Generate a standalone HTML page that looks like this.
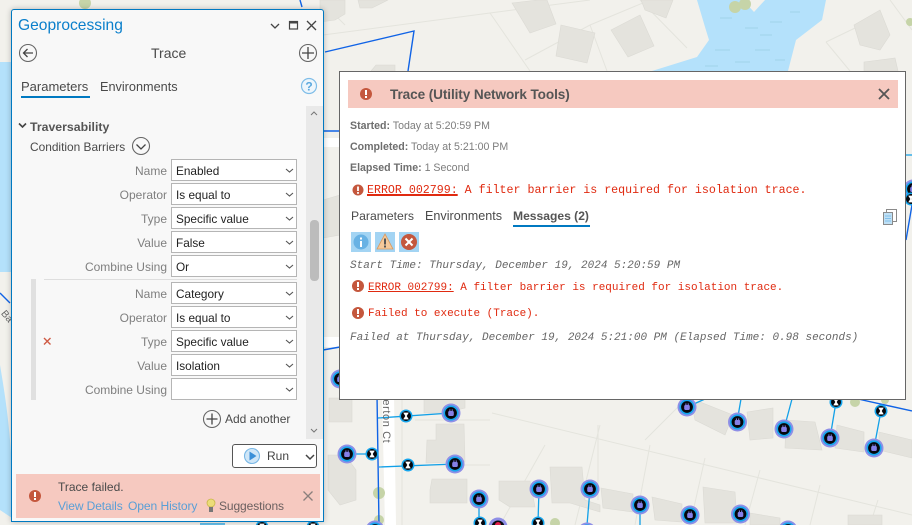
<!DOCTYPE html>
<html><head><meta charset="utf-8"><style>
html,body{margin:0;padding:0}
body{width:912px;height:525px;overflow:hidden;position:relative;background:#f2f1ec;font-family:"Liberation Sans",sans-serif}
svg{position:absolute;left:0;top:0}
.t{position:absolute;white-space:nowrap;line-height:16px;height:16px}
.l{position:absolute;white-space:nowrap;line-height:16px;right:745px;color:#7f7f7f;font-size:12px}
.s{position:absolute;left:171px;width:124px;height:20px;background:#fff;border:1px solid #b5b5b5;font-size:11.8px;line-height:22px;color:#222;text-indent:4px}
.m{position:absolute;white-space:pre;line-height:16px;font-family:"Liberation Mono",monospace;font-size:11px}
.r{color:#e02a10}
.i{font-style:italic;color:#666}
.d{font-size:10.6px;color:#7d7d7d}
.d b{color:#6e6e6e}
</style></head><body>
<svg width="912" height="525" viewBox="0 0 912 525">
<defs>
<g id="mt"><circle r="9.5" fill="#8f8fe6"/><circle r="7.6" fill="#16a6ee"/><circle r="5.9" fill="#05070d"/><rect x="-2.8" y="-2" width="5.6" height="5" rx="1.2" fill="#8580e8"/><rect x="-1.6" y="-3.6" width="1" height="2" fill="#8580e8"/><rect x=".7" y="-3.6" width="1" height="2" fill="#8580e8"/></g>
<g id="jn"><circle r="6.5" fill="#16a6ee"/><circle r="5" fill="#05070d"/><path d="M-2.8-3.4H2.8L.7 0 2.8 3.4H-2.8L-.7 0Z" fill="#fff"/></g>
</defs>
<!-- water -->
<path d="M697 0L705 27L709 40L697 57L652 71H788L796 40L822 20L826 0H765L754 12L743 0Z" fill="#b4e1fb"/>
<path d="M0 62V272H12V62Z" fill="#b4e1fb"/>
<path d="M0 365C6 400 10 430 12 470V518L0 510Z" fill="#b4e1fb"/>
<g stroke="#9fd2ea" stroke-width="1" fill="none">
<path d="M720 18H732M745 28H758M770 22H782M790 12H800M715 50H730M755 50H770M735 62H750M775 60H785M705 66H718M760 35H772"/>
</g>
<!-- parcel lines -->
<g stroke="#e4e4dd" stroke-width="1" fill="none">
<path d="M323 35L490 13M490 13L590 0M490 13L530 71M320 0L345 25M590 25L525 60M590 25L607 71M590 25L650 0M640 0L687 48M826 42L880 16M826 42L850 71M890 0L912 30"/>
<path d="M492 413L912 515M545 445L500 525M600 425L575 525M650 445L635 525M705 458L690 525M760 470L745 525M820 485L810 525M878 500L870 525M645 440L680 405M598 425V500M415 420H490M415 465H490M402 400V525"/>
</g>
<!-- houses -->
<g fill="#e4e3dd" stroke="#dbdad4" stroke-width=".6">
<path d="M512 3L538 0H547L556 24L530 33Z"/>
<path d="M561 25L595 33L587 63L556 56Z"/>
<path d="M611 30L640 15L654 46L628 57Z"/>
<path d="M641 0H673L666 18L645 10Z"/>
<path d="M320 0H345V14L335 20L320 22Z"/><path d="M358 0H388L372 8H360Z"/>
<path d="M854 25L880 10L890 35L880 50L860 45Z"/><path d="M864 62L895 58L898 71H864Z"/>
<path d="M371 71L376 65H395V71Z"/>
<path d="M329 398H352V422H329Z"/><path d="M424 398H465V408L445 413H424Z"/>
<path d="M436 424H464L465 462L426 463L427 440H436Z"/><path d="M432 479H467V503H430V490Z"/>
<path d="M328 455H345L356 470V500L340 505L328 490Z"/>
<path d="M499 481H530L535 507H510L499 500Z"/><path d="M550 467H582L585 500L600 505V512L570 503H552Z"/>
<path d="M601 488L633 494V512L603 508Z"/><path d="M652 497L682 504V522L655 520Z"/><path d="M703 487L735 492L737 523H705Z"/>
<path d="M750 513L780 518V525H750Z"/><path d="M848 515H882V525H848Z"/>
<path d="M692 405L700 402L733 415L725 435L695 420Z"/><path d="M747 412L773 408V438L750 440Z"/>
<path d="M786 420L815 422L822 450L785 448Z"/><path d="M837 425L864 432V452L835 448Z"/><path d="M879 432L912 440V458L879 450Z"/>
<path d="M323 200L340 195V235L323 238Z"/>
</g>
<!-- road -->
<path d="M382 395H394L396 525H385Z" fill="#fff"/>
<rect x="323" y="138" width="17" height="9" fill="#fff"/><rect x="323" y="337" width="17" height="10" fill="#fff"/>
<g fill="#c6d4a8"><circle cx="735" cy="7" r="6"/><circle cx="745" cy="4" r="6"/><circle cx="379" cy="493" r="6"/><circle cx="379" cy="520" r="5"/><circle cx="555" cy="523" r="5"/><circle cx="855" cy="402" r="5"/><circle cx="885" cy="400" r="4"/><circle cx="85" cy="3" r="6"/><circle cx="910" cy="22" r="4"/></g>
<!-- blue lines -->
<g fill="none" stroke="#1063e6" stroke-width="1.4">
<path d="M325 52L414 31L408 71M300 0L302 7M377 395L379 525M323 131H340M323 350L340 347M0 293L10 303M858 399L912 411M912 205L906 240"/>
</g>
<g fill="none" stroke="#11a0e8" stroke-width="1.3">
<path d="M378 418L451 413M347 454H372M379 467L455 464M479 499V523M539 489L538 523M590 489L587 525M640 505V525M687 407L705 399M737 422L741 399M784 429L792 399M830 438L836 402M874 448L881 411M906 155H912M200 524H225"/>
</g>
<!-- nodes -->
<use href="#mt" x="451" y="413"/><use href="#mt" x="687" y="407"/><use href="#mt" x="737.5" y="422"/><use href="#mt" x="784" y="429"/><use href="#mt" x="830" y="438"/><use href="#mt" x="874" y="448"/><use href="#mt" x="347" y="454"/><use href="#mt" x="455" y="464"/><use href="#mt" x="479" y="499"/><use href="#mt" x="539" y="489"/><use href="#mt" x="590" y="489"/><use href="#mt" x="640" y="505"/><use href="#mt" x="690" y="515"/><use href="#mt" x="740.5" y="514"/><use href="#mt" x="375" y="530"/><use href="#mt" x="587" y="532"/><use href="#mt" x="788" y="530"/><use href="#mt" x="913" y="189"/>
<use href="#mt" x="340" y="379"/>
<circle cx="498" cy="527" r="9.5" fill="#8f8fe6"/><circle cx="498" cy="527" r="6.5" fill="#0a0a10"/><circle cx="498" cy="525" r="3" fill="#e2204a"/>
<use href="#jn" x="406" y="416"/><use href="#jn" x="372" y="454"/><use href="#jn" x="408" y="465"/><use href="#jn" x="480" y="523"/><use href="#jn" x="538" y="523"/><use href="#jn" x="836" y="402"/><use href="#jn" x="881" y="411"/><use href="#jn" x="911" y="199"/><use href="#jn" x="262" y="527"/><use href="#jn" x="313" y="527"/>
</svg>
<div style="position:absolute;left:380px;top:418px;font:11px/12px 'Liberation Sans',sans-serif;color:#666;transform:translate(-50%,-50%) rotate(90deg);white-space:nowrap;margin-left:6px;letter-spacing:.6px">nerton Ct</div>
<div style="position:absolute;left:0;top:311px;font:10px/12px 'Liberation Sans',sans-serif;color:#666;transform:rotate(50deg)">Ba</div>

<!-- Panel -->
<div style="position:absolute;left:11px;top:9px;width:311px;height:511px;background:#f8f8f8;border:1px solid #0079c1;border-radius:3px 3px 0 0;box-shadow:0 0 6px rgba(0,0,0,.25)"></div>
<div class="t" style="left:18px;top:18px;font-size:15.6px;color:#0a7fcb">Geoprocessing</div>
<div class="t" style="left:151px;top:45px;font-size:14px;color:#4a4a4a">Trace</div>
<div class="t" style="left:21px;top:79px;font-size:13px;color:#4a4a4a">Parameters</div>
<div style="position:absolute;left:21px;top:95.5px;width:69px;height:2px;background:#0079c1"></div>
<div class="t" style="left:100px;top:79px;font-size:12.7px;color:#4a4a4a">Environments</div>
<div class="t" style="left:30px;top:119px;font-size:12.3px;font-weight:bold;color:#555">Traversability</div>
<div class="t" style="left:30px;top:139px;font-size:11.9px;color:#4a4a4a">Condition Barriers</div>
<div style="position:absolute;left:306px;top:106px;width:17px;height:333px;background:#e9e9e9"></div>
<div style="position:absolute;left:310px;top:220px;width:9px;height:61px;background:#bcbcbc;border-radius:4px"></div>
<div style="position:absolute;left:31px;top:279px;width:5px;height:121px;background:#e0e0e0"></div>
<div style="position:absolute;left:44px;top:279px;width:253px;height:1px;background:#dedede"></div>

<div class="l" style="top:163px">Name</div><div class="s" style="top:159px">Enabled</div>
<div class="l" style="top:187px">Operator</div><div class="s" style="top:183px">Is equal to</div>
<div class="l" style="top:211px">Type</div><div class="s" style="top:207px">Specific value</div>
<div class="l" style="top:235px">Value</div><div class="s" style="top:231px">False</div>
<div class="l" style="top:259px">Combine Using</div><div class="s" style="top:255px">Or</div>
<div class="l" style="top:286px">Name</div><div class="s" style="top:282px">Category</div>
<div class="l" style="top:310px">Operator</div><div class="s" style="top:306px">Is equal to</div>
<div class="l" style="top:334px">Type</div><div class="s" style="top:330px">Specific value</div>
<div class="l" style="top:358px">Value</div><div class="s" style="top:354px">Isolation</div>
<div class="l" style="top:382px">Combine Using</div><div class="s" style="top:378px"></div>
<div class="t" style="left:225px;top:411px;font-size:12px;color:#4a4a4a">Add another</div>
<div style="position:absolute;left:232px;top:444px;width:83px;height:22px;background:#fff;border:1px solid #555;border-radius:3px"></div>
<div class="t" style="left:267px;top:448px;font-size:12px;color:#444">Run</div>

<div style="position:absolute;left:16px;top:474px;width:304px;height:44px;background:#f6c9c0"></div>
<div class="t" style="left:58px;top:479px;font-size:12px;color:#4a4a4a">Trace failed.</div>
<div class="t" style="left:58px;top:498px;font-size:12px;color:#5a9fd6;letter-spacing:-.1px">View Details</div>
<div class="t" style="left:128px;top:498px;font-size:12.1px;color:#5a9fd6;letter-spacing:-.1px">Open History</div>
<div class="t" style="left:219px;top:498px;font-size:12px;color:#6b6060;letter-spacing:-.1px">Suggestions</div>

<!-- Dialog -->
<div style="position:absolute;left:339px;top:71px;width:565px;height:327px;background:#fff;border:1px solid #666"></div>
<div style="position:absolute;left:348px;top:80px;width:550px;height:28px;background:#f6c9c0"></div>
<div class="t" style="left:390px;top:87px;font-size:13.6px;font-weight:bold;color:#555;letter-spacing:-.1px">Trace (Utility Network Tools)</div>
<div class="t d" style="left:350px;top:118px"><b>Started:</b> Today at 5:20:59 PM</div>
<div class="t d" style="left:350px;top:139px"><b>Completed:</b> Today at 5:21:00 PM</div>
<div class="t d" style="left:350px;top:160px"><b>Elapsed Time:</b> 1 Second</div>
<div class="m" style="left:367px;top:183px;font-size:11.63px;color:#e02a10"><span style="text-decoration:underline;text-decoration-thickness:1.5px">ERROR 002799:</span> A filter barrier is required for isolation trace.</div>
<div class="t" style="left:351px;top:208px;font-size:12.2px;color:#4a4a4a">Parameters</div>
<div class="t" style="left:425px;top:208px;font-size:12.6px;color:#4a4a4a">Environments</div>
<div class="t" style="left:513px;top:208px;font-size:12.1px;font-weight:bold;color:#555">Messages (2)</div>
<div style="position:absolute;left:513px;top:225px;width:77px;height:2px;background:#0079c1"></div>
<div class="m i" style="left:350px;top:258px">Start Time: Thursday, December 19, 2024 5:20:59 PM</div>
<div class="m r" style="left:368px;top:280px;letter-spacing:-.01px"><span style="text-decoration:underline">ERROR 002799:</span> A filter barrier is required for isolation trace.</div>
<div class="m r" style="left:368px;top:306px;letter-spacing:-.01px">Failed to execute (Trace).</div>
<div class="m i" style="left:350px;top:330px">Failed at Thursday, December 19, 2024 5:21:00 PM (Elapsed Time: 0.98 seconds)</div>

<!-- Icons -->
<svg width="912" height="525" viewBox="0 0 912 525" style="pointer-events:none">
<g fill="none" stroke="#444" stroke-width="1.3">
<path d="M271 24L275 28L279 24"/><rect x="289.500" y="21.500" width="8" height="7.500" stroke-width="1.200"/><path d="M289.500 22.500H297.500" stroke-width="2"/><path d="M307 21L316 30M316 21L307 30" stroke-width="1.300"/>
</g>
<g fill="none" stroke="#666" stroke-width="1.1">
<circle cx="28" cy="53" r="8.5"/><circle cx="308" cy="53" r="8.5"/><circle cx="141" cy="146" r="8.5"/><circle cx="212" cy="419" r="8.5"/>
</g>
<g fill="none" stroke="#444" stroke-width="1.3">
<path d="M33 53H23.500M27.500 49L23.500 53L27.500 57"/><path d="M302 53H314M308 47V59"/><path d="M136.500 144.500L141 149L145.500 144.500"/><path d="M206.500 419H217.500M212 413.500V424.500"/>
<path d="M19 123.500L22.500 127L26 123.500" stroke-width="1.600"/>
<path d="M311 115L314 112L317 115M311 429L314 432L317 429" stroke="#777" stroke-width="1"/>
<path d="M306 455L310 459L314 455" stroke-width="1.500"/>
</g>
<g fill="none" stroke="#555" stroke-width="1">
<path d="M286 169L289.500 172L293 169M286 193L289.500 196L293 193M286 217L289.500 220L293 217M286 241L289.500 244L293 241M286 265L289.500 268L293 265M286 292L289.500 295L293 292M286 316L289.500 319L293 316M286 340L289.500 343L293 340M286 364L289.500 367L293 364M286 388L289.500 391L293 388" stroke-width="1.100"/>
</g>
<circle cx="309" cy="86" r="7.500" fill="#eef6fc" stroke="#7fbde8" stroke-width="1.200"/>
<text x="309" y="90.500" text-anchor="middle" font-family="Liberation Sans" font-size="12" font-weight="bold" fill="#5ba8de">?</text>
<path d="M44 338L50.500 344.500M50.500 338L44 344.500" stroke="#cf5a44" stroke-width="1.400"/>
<circle cx="252" cy="456" r="7.500" fill="#cfe6f7" stroke="#7ab8e6" stroke-width="1.100"/><path d="M249.500 451.500L256.500 456L249.500 460.500Z" fill="#3a8fd8"/>
<circle cx="35" cy="496" r="6" fill="#c4573d"/><rect x="34" y="492" width="2" height="5" fill="#fff"/><rect x="34" y="498" width="2" height="2" fill="#fff"/>
<circle cx="366" cy="94" r="6" fill="#c4573d"/><rect x="365" y="90" width="2" height="5" fill="#fff"/><rect x="365" y="96" width="2" height="2" fill="#fff"/>
<circle cx="358" cy="190" r="5.500" fill="#c4573d"/><rect x="357.100" y="186.500" width="1.800" height="4.500" fill="#fff"/><rect x="357.100" y="192" width="1.800" height="1.800" fill="#fff"/>
<circle cx="358" cy="286" r="6" fill="#c4573d"/><rect x="357" y="282" width="2" height="5" fill="#fff"/><rect x="357" y="288" width="2" height="2" fill="#fff"/>
<circle cx="358" cy="313" r="6" fill="#c4573d"/><rect x="357" y="309" width="2" height="5" fill="#fff"/><rect x="357" y="315" width="2" height="2" fill="#fff"/>
<path d="M303.500 491.500L312.500 500.500M312.500 491.500L303.500 500.500" stroke="#8a7f7c" stroke-width="1.300" fill="none"/>
<path d="M879 89L889 99M889 89L879 99" stroke="#555" stroke-width="1.800" fill="none"/>
<circle cx="211" cy="503" r="4" fill="#ecdc78" stroke="#c9b64a" stroke-width=".8"/><rect x="209" y="507" width="4" height="5" fill="#777"/>
<rect x="351" y="232" width="20" height="20" fill="#a3d4f3"/><circle cx="361" cy="242" r="7.500" fill="#68b2e4"/><rect x="360" y="241" width="2" height="6" fill="#fff"/><rect x="360" y="237.500" width="2" height="2" fill="#fff"/>
<rect x="375" y="232" width="20" height="20" fill="#a3d4f3"/><path d="M385 234L393 249H377Z" fill="#f4c99a" stroke="#d99a60" stroke-width=".8"/><rect x="384" y="238.500" width="2" height="6" fill="#555"/><rect x="384" y="245.500" width="2" height="2" fill="#555"/>
<rect x="399" y="232" width="20" height="20" fill="#a3d4f3"/><circle cx="409" cy="242" r="8" fill="#c4573d"/><path d="M405.500 238.500L412.500 245.500M412.500 238.500L405.500 245.500" stroke="#fff" stroke-width="2" fill="none"/>
<g fill="#fff" stroke="#8a8a8a" stroke-width="1"><rect x="886.500" y="209.500" width="10" height="12"/><rect x="883.500" y="212.500" width="9" height="12" fill="#bfe0f5"/></g>
<path d="M885 216H891M885 218.500H891M885 221H891" stroke="#6fb5e6" stroke-width=".8"/>
</svg>
</body></html>
